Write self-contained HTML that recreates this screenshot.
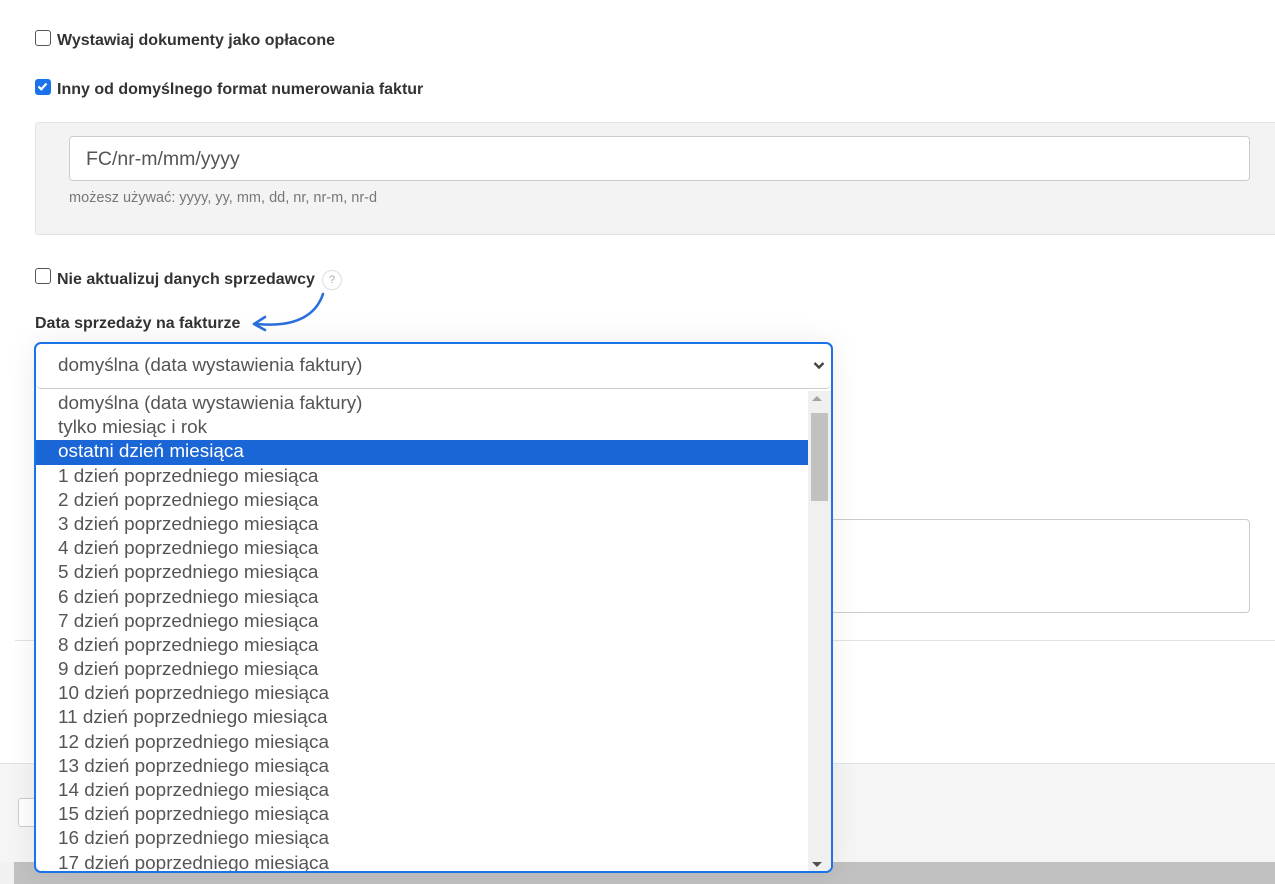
<!DOCTYPE html>
<html><head><meta charset="utf-8"><style>
*{box-sizing:border-box;margin:0;padding:0}
body{width:1275px;height:884px;overflow:hidden;background:#fff;font-family:"Liberation Sans",Arial,sans-serif;position:relative;color:#333}
.abs{position:absolute}
.cb{position:absolute;width:16px;height:16px;border:1.5px solid #555;border-radius:3px;background:#fff}
.lbl{position:absolute;font-size:16px;font-weight:bold;color:#333}
.list div{height:24.2px;line-height:24.2px;padding-left:22px;font-size:18.9px;color:#555;white-space:nowrap}
</style></head><body>
<div class="cb" style="left:35px;top:30px"></div>
<div class="lbl" style="left:57px;top:32px">Wystawiaj dokumenty jako opłacone</div>
<div class="cb" style="left:35px;top:79px;background:#1a73e8;border-color:#1a73e8"><svg width="13" height="13" viewBox="0 0 13 13" style="position:absolute;left:0;top:0"><path d="M2.5 6.5 L5.3 9.3 L10.5 3.5" stroke="#fff" stroke-width="2.2" fill="none"/></svg></div>
<div class="lbl" style="left:57px;top:81px">Inny od domyślnego format numerowania faktur</div>
<div class="abs" style="left:35px;top:122px;width:1245px;height:113px;background:#f3f3f3;border:1px solid #e3e3e3;border-radius:3px"></div>
<div class="abs" style="left:69px;top:136px;width:1181px;height:45px;background:#fff;border:1px solid #ccc;border-radius:4px;font-size:19.5px;color:#555;padding:11px 0 0 16px">FC/nr-m/mm/yyyy</div>
<div class="abs" style="left:69px;top:190px;font-size:14.5px;color:#777">możesz używać: yyyy, yy, mm, dd, nr, nr-m, nr-d</div>
<div class="cb" style="left:35px;top:268px"></div>
<div class="lbl" style="left:57px;top:271px">Nie aktualizuj danych sprzedawcy</div>
<div class="abs" style="left:322px;top:270px;width:20px;height:20px;border:1px solid #ddd;border-radius:50%;font-size:11px;color:#aaa;text-align:center;line-height:18px">?</div>
<svg class="abs" style="left:245px;top:290px" width="85" height="45" viewBox="0 0 85 45"><path d="M78 4 C72 22 55 38 12 34" stroke="#2a6fdb" stroke-width="2.6" fill="none" stroke-linecap="round"/><path d="M20 27 L9 34 L20 40" stroke="#2a6fdb" stroke-width="2.6" fill="none" stroke-linecap="round" stroke-linejoin="round"/></svg>
<div class="lbl" style="left:35px;top:315px">Data sprzedaży na fakturze</div>
<div class="abs" style="left:830px;top:519px;width:420px;height:94px;border:1px solid #ccc;border-radius:4px"></div>
<div class="abs" style="left:15px;top:640px;width:1260px;height:1px;background:#e3e3e3"></div>
<div class="abs" style="left:0;top:763px;width:1275px;height:100px;background:#f5f5f5;border-top:1px solid #e0e4ea"></div>
<div class="abs" style="left:18px;top:798px;width:30px;height:29px;background:#fff;border:1px solid #ccc;border-radius:3px"></div>
<div class="abs" style="left:0;top:862px;width:1275px;height:22px;background:#c1c1c1"></div>
<div class="abs" style="left:0;top:862px;width:14px;height:22px;background:#f1f1f1"></div>
<div class="abs" style="left:34px;top:342px;width:799px;height:531px;border:2px solid #1a73e8;border-radius:7px;background:#fff;overflow:hidden;box-shadow:0 0 30px rgba(0,0,0,.08)">
 <div style="height:45px;border-bottom:1px solid #ccc;border-radius:0 0 5px 5px;font-size:18.9px;color:#555;padding:11px 0 0 22px;position:relative">domyślna (data wystawienia faktury)<svg style="position:absolute;right:6px;top:17px" width="12" height="9" viewBox="0 0 12 9"><path d="M1.5 2 L6 6.5 L10.5 2" stroke="#444" stroke-width="2.4" fill="none"/></svg></div>
 <div class="list" style="position:absolute;left:0;top:48px;width:772px">
  <div>domyślna (data wystawienia faktury)</div><div>tylko miesiąc i rok</div>
  <div style="background:#1a66d6;color:#fff">ostatni dzień miesiąca</div>
  <div>1 dzień poprzedniego miesiąca</div><div>2 dzień poprzedniego miesiąca</div><div>3 dzień poprzedniego miesiąca</div><div>4 dzień poprzedniego miesiąca</div><div>5 dzień poprzedniego miesiąca</div><div>6 dzień poprzedniego miesiąca</div><div>7 dzień poprzedniego miesiąca</div><div>8 dzień poprzedniego miesiąca</div><div>9 dzień poprzedniego miesiąca</div><div>10 dzień poprzedniego miesiąca</div><div>11 dzień poprzedniego miesiąca</div><div>12 dzień poprzedniego miesiąca</div><div>13 dzień poprzedniego miesiąca</div><div>14 dzień poprzedniego miesiąca</div><div>15 dzień poprzedniego miesiąca</div><div>16 dzień poprzedniego miesiąca</div><div>17 dzień poprzedniego miesiąca</div>
 </div>
 <div style="position:absolute;right:0;top:47px;width:23px;height:484px;background:#f0f0f0">
  <div style="position:absolute;left:4px;top:5px;width:0;height:0;border-left:5px solid transparent;border-right:5px solid transparent;border-bottom:5px solid #a3a3a3"></div>
  <div style="position:absolute;left:3px;top:22px;width:17px;height:88px;background:#c1c1c1"></div>
  <div style="position:absolute;left:4px;bottom:8px;width:0;height:0;border-left:5px solid transparent;border-right:5px solid transparent;border-top:5px solid #505050"></div>
 </div>
</div>
</body></html>
